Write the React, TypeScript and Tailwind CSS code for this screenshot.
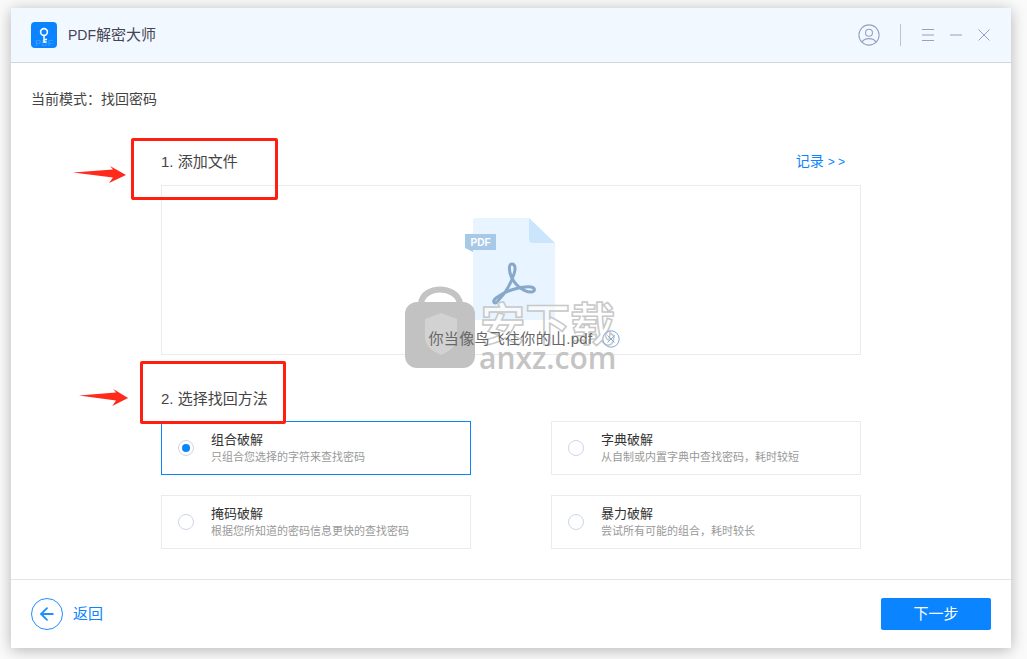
import { ArrowLeft } from "lucide-react";

const font = "font-['Liberation_Sans','Noto_Sans_CJK_SC',sans-serif]";

const methods = [
  { title: "组合破解", desc: "只组合您选择的字符来查找密码", active: true },
  { title: "字典破解", desc: "从自制或内置字典中查找密码，耗时较短" },
  { title: "掩码破解", desc: "根据您所知道的密码信息更快的查找密码" },
  { title: "暴力破解", desc: "尝试所有可能的组合，耗时较长" },
];

function MethodCard({ title, desc, active }: { title: string; desc: string; active?: boolean }) {
  return (
    <div
      className={`flex h-[54px] w-[310px] items-center border pl-[16px] ${
        active ? "border-[#0a84ff]" : "border-[#e9ebee]"
      }`}
    >
      <span className="flex size-[16px] items-center justify-center rounded-full border border-[#ccd6ea] bg-white">
        {active && <span className="size-[8px] rounded-full bg-[#0a84ff]" />}
      </span>
      <div className="ml-[17px] -mt-[1px]">
        <p className="text-[13px] leading-[18px] text-[#333]">{title}</p>
        <p className="text-[11px] leading-[16px] text-[#999]">{desc}</p>
      </div>
    </div>
  );
}

function RedArrow({ className, width, height }: { className: string; width: number; height: number }) {
  return (
    <svg className={className} width={width} height={height} viewBox="0 0 55 24" preserveAspectRatio="none">
      <path d="M1 9.5 L41 6.5 L38 3 L54 12 L37 20 L41 14.5 Z" fill="#ff2a1a" />
    </svg>
  );
}

function Watermark() {
  return (
    <div className="pointer-events-none absolute left-[404px] top-[281px] flex items-start">
      <svg width="72" height="90" viewBox="0 0 72 90">
        <path d="M17 22 C20 4 52 4 56 22" fill="none" stroke="#c4c4c4" strokeWidth="6" />
        <rect x="1" y="21" width="70" height="66" rx="12" fill="#c2c2c2" />
        <path d="M21 38 L37 32 L53 38 V56 C53 66 44 71 37 74 C30 71 21 66 21 56 Z" fill="#d2d2d2" />
      </svg>
      <div className="ml-[3px] flex flex-col items-center pt-[18px]">
        <span className="font-['Noto_Sans_CJK_SC',sans-serif] text-[45px] font-bold leading-[46px] text-white/60 [-webkit-text-stroke:1.5px_#c8c8c8]">
          安下载
        </span>
        <span className="font-['Open_Sans',sans-serif] -mt-[2px] text-[30px] font-semibold leading-[30px] text-[#c4c4c4]">
          anxz.com
        </span>
      </div>
    </div>
  );
}

export default function App() {
  return (
    <div className={`${font} relative h-[659px] w-[1027px] overflow-hidden bg-[#fafafa] pl-[11px] pt-[8px]`}>
      <div className="relative flex h-[640px] w-[1000px] flex-col bg-white shadow-[0_2px_14px_rgba(0,0,0,0.28)]">
        <header className="flex h-[55px] shrink-0 items-center border-b border-[#d4d8de] bg-[#f1f8ff] pl-[20px] pr-[21px]">
          <svg width="26" height="26" viewBox="0 0 26 26">
            <rect width="26" height="26" rx="4" fill="#0a84ff" />
            <text x="13" y="24" textAnchor="middle" fontSize="9" fontWeight="700" fill="#fff" fillOpacity="0.18" fontFamily="Liberation Sans">PDF</text>
            <circle cx="13" cy="10" r="3.4" fill="none" stroke="#fff" strokeWidth="1.6" />
            <path d="M13 13.5 V21 M13 17.5 H16 M13 20 H15.5" stroke="#fff" strokeWidth="1.5" fill="none" />
          </svg>
          <span className="ml-[11px] text-[15px] text-[#445]">
            <span className="text-[14px]">PDF</span>解密大师
          </span>
          <div className="ml-auto flex items-center text-[#94a3c2]">
            <svg width="22" height="22" viewBox="0 0 24 24" fill="none" stroke="currentColor" strokeWidth="1.2">
              <circle cx="12" cy="12" r="11" />
              <circle cx="12" cy="9.5" r="3.8" />
              <path d="M4.2 20 C7 14.6 17 14.6 19.8 20" />
            </svg>
            <span className="ml-[20px] h-[22px] w-px bg-[#b9c3d8]" />
            <svg className="ml-[21px]" width="12" height="12" viewBox="0 0 12 12" stroke="currentColor" strokeWidth="1">
              <path d="M0 0.5 H12 M0 6 H12 M0 11.5 H12" />
            </svg>
            <svg className="ml-[16px]" width="12" height="12" viewBox="0 0 12 12" stroke="currentColor" strokeWidth="1">
              <path d="M0 6 H12" />
            </svg>
            <svg className="ml-[16px]" width="12" height="12" viewBox="0 0 12 12" stroke="currentColor" strokeWidth="1">
              <path d="M0.5 0.5 L11.5 11.5 M11.5 0.5 L0.5 11.5" />
            </svg>
          </div>
        </header>

        <main className="flex-1">
          <p className="ml-[20px] mt-[27px] text-[14px] leading-[18px] text-[#444]">当前模式：找回密码</p>
          <section className="ml-[150px] mt-[43px] w-[700px]">
            <div className="flex items-center justify-between pr-[16px]">
              <h2 className="text-[15px] leading-[20px] text-[#444]">1. 添加文件</h2>
              <span className="text-[14px] leading-[20px] text-[#0a84ff]">
                记录 <span className="text-[12px]">&gt; &gt;</span>
              </span>
            </div>
            <div className="mt-[13px] flex h-[170px] flex-col items-center border border-[#e9ebee] pt-[32px]">
              <svg className="-ml-[2px]" width="90" height="102" viewBox="0 0 90 102">
                <path d="M8 3 Q8 0 11 0 H64 L90 25 V102 H8 Z" fill="#e8f4ff" />
                <path d="M64 0 L90 25 H68 Q64 25 64 21 Z" fill="#cbe5fd" />
                <path d="M0 16 H31 V32 H8 V34 L0 30 Z" fill="#a8c8e8" />
                <text x="15.5" y="28" textAnchor="middle" fontSize="10" fontWeight="700" fill="#fff" fontFamily="Liberation Sans">PDF</text>
                <path
                  d="M47 46 C50 46 51 50 49 56 C45 68 38 78 32 84 C29 87 27 83 31 80 C40 73 55 68 66 69 C71 70 70 74 66 74 C58 74 48 66 45 55 C44 50 44 46 47 46 Z"
                  fill="none"
                  stroke="#87a9c9"
                  strokeWidth="3"
                  strokeLinejoin="round"
                />
              </svg>
              <div className="relative z-10 ml-[27px] mt-[9px] flex items-center">
                <span className="text-[15px] leading-[20px] tracking-[0.3px] text-[#666]">你当像鸟飞往你的山.pdf</span>
                <svg className="ml-[10px]" width="18" height="18" viewBox="0 0 18 18" fill="none" stroke="#7fa9d6" strokeWidth="1">
                  <circle cx="9" cy="9" r="8.2" />
                  <path d="M5.5 5.5 L12.5 12.5 M12.5 5.5 L5.5 12.5" />
                </svg>
              </div>
            </div>
            <h2 className="mt-[34px] text-[15px] leading-[20px] text-[#444]">2. 选择找回方法</h2>
            <div className="mt-[12px] grid grid-cols-[310px_310px] justify-between gap-y-[20px]">
              {methods.map((m) => (
                <MethodCard key={m.title} {...m} />
              ))}
            </div>
          </section>
        </main>

        <footer className="flex h-[69px] shrink-0 items-center justify-between border-t border-[#e4e4e4] pl-[20px] pr-[20px]">
          <div className="flex items-center">
            <span className="flex size-[32px] items-center justify-center rounded-full border border-[#1f8fff] text-[#1f8fff]">
              <ArrowLeft size={20} strokeWidth={2.2} />
            </span>
            <span className="ml-[10px] text-[15px] text-[#0a84ff]">返回</span>
          </div>
          <button className="h-[32px] w-[110px] rounded-[2px] bg-[#0a84ff] text-[15px] text-white">下一步</button>
        </footer>
      </div>

      {/* screenshot annotations */}
      <div className="absolute left-[131px] top-[138px] h-[62px] w-[147px] rounded-[2px] border-[3px] border-[#ff1f12]" />
      <div className="absolute left-[140px] top-[361px] h-[63px] w-[146px] rounded-[2px] border-[3px] border-[#ff1f12]" />
      <RedArrow className="absolute left-[72px] top-[163px]" width={55} height={24} />
      <RedArrow className="absolute left-[78px] top-[386px]" width={51} height={24} />
      <Watermark />
    </div>
  );
}
